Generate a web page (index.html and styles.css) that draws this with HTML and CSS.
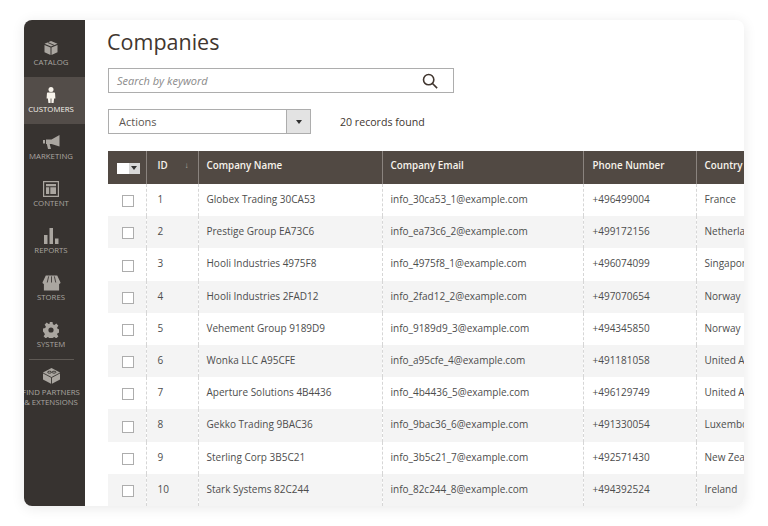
FILE: index.html
```html
<!DOCTYPE html>
<html>
<head>
  <title>Companies</title>
  <link rel="stylesheet" href="styles.css">
</head>
<body>
<div class="card">
  <div class="sidebar">
    <div class="nav-item">
      <svg class="nav-icon" viewBox="0 0 16 16"><path d="M8 1l6.500 2.800L8 6.600 1.500 3.800z M1.500 5l6 2.600V15l-6-2.800z M14.500 5l-6 2.600V15l6-2.800z"/><path class="cut" d="M4.800 2.500l6.200 2.800"/></svg>
      <span>Catalog</span>
    </div>
    <div class="nav-item active">
      <svg class="nav-icon" viewBox="0 0 16 16"><circle cx="8" cy="2.600" r="2.500"/><path d="M5 5.600h6c.8 0 1 .5 1.100 1.100l.3 4.800h-1.300L10.600 16H8.400v-4.500H7.600V16H5.400l-.5-4.500H3.600l.3-4.800c.1-.6.300-1.100 1.100-1.100z"/></svg>
      <span>Customers</span>
    </div>
    <div class="nav-item">
      <svg class="nav-icon wide" viewBox="0 0 18 16"><path d="M17 1v11.500L9 10H7.200l1.300 5H5.500L4.300 10H3.500V5.500H9z"/><path d="M.5 6h2v3.500h-2z"/></svg>
      <span>Marketing</span>
    </div>
    <div class="nav-item">
      <svg class="nav-icon" viewBox="0 0 16 16"><path fill-rule="evenodd" d="M0 0h16v16H0z M1.200 1.200v13.600h13.600V1.200z"/><path d="M3 3h10v2.200H3z M3 6.300h3.200V13H3z M7.300 6.300H13V13H7.300z"/></svg>
      <span>Content</span>
    </div>
    <div class="nav-item">
      <svg class="nav-icon" viewBox="0 0 16 16"><path d="M1 7h3.500v9H1z M6.500 0H10v16H6.500z M12 10.500h3.500V16H12z"/></svg>
      <span>Reports</span>
    </div>
    <div class="nav-item">
      <svg class="nav-icon wide" viewBox="0 0 20 16"><path d="M4 0h12l3.500 7.500c0 1-.8 1.500-1.500 1.500H2C1.300 9 .5 8.500.5 7.500z"/><path d="M2 9h16v7H2z"/><path class="cut" d="M7 1L5.500 7.500M10 1v6.500M13 1l1.500 6.500"/></svg>
      <span>Stores</span>
    </div>
    <div class="nav-item">
      <svg class="nav-icon" viewBox="0 0 16 16"><path fill-rule="evenodd" d="M6.500 0h3l.4 2.300 1.500.6 1.900-1.300 2.100 2.100-1.300 1.900.6 1.500 2.300.4v3l-2.300.4-.6 1.500 1.300 1.900-2.100 2.100-1.900-1.300-1.500.6-.4 2.300h-3l-.4-2.300-1.500-.6-1.900 1.300-2.100-2.100 1.300-1.900-.6-1.500L0 9.500v-3l2.300-.4.6-1.500L1.600 2.700l2.100-2.100 1.900 1.300 1.500-.6z M8 5.400a2.600 2.600 0 1 0 0 5.200 2.600 2.600 0 0 0 0-5.200z"/></svg>
      <span>System</span>
    </div>
    <div class="nav-sep"></div>
    <div class="nav-item partners">
      <svg class="nav-icon wide" viewBox="0 0 18 16"><path d="M9 0l8.500 4.500v7L9 16 .5 11.500v-7z"/><path class="cut" d="M.5 5L9 9.500 17.500 5M9 9.500V16M5 4.200a2 1 0 1 0 4 0 2 1 0 1 0-4 0M9.500 4.200a2 1 0 1 0 4 0 2 1 0 1 0-4 0"/></svg>
      <span>Find Partners<br>&amp; Extensions</span>
    </div>
  </div>

  <div class="main">
    <h1 class="title">Companies</h1>

    <div class="search">
      <span class="search-text">Search by keyword</span>
      <svg class="search-icon" viewBox="0 0 18 18"><circle cx="7.500" cy="7.500" r="5.800"/><path d="M11.800 11.800L17 17"/></svg>
    </div>

    <div class="toolbar">
      <div class="actions">
        <span class="actions-label">Actions</span>
        <span class="actions-btn"><i class="arrow"></i></span>
      </div>
      <span class="records">20 records found</span>
    </div>

    <table class="grid">
      <thead>
        <tr>
          <th class="col-check"><span class="head-check"><b></b><span><i class="arrow"></i></span></span></th>
          <th class="col-id">ID<span class="sort">↓</span></th>
          <th class="col-name">Company Name</th>
          <th class="col-email">Company Email</th>
          <th class="col-phone">Phone Number</th>
          <th class="col-country">Country</th>
        </tr>
      </thead>
      <tbody>
        <tr><td><span class="box"></span></td><td>1</td><td>Globex Trading 30CA53</td><td>info_30ca53_1@example.com</td><td>+496499004</td><td>France</td></tr>
        <tr><td><span class="box"></span></td><td>2</td><td>Prestige Group EA73C6</td><td>info_ea73c6_2@example.com</td><td>+499172156</td><td>Netherlands</td></tr>
        <tr><td><span class="box"></span></td><td>3</td><td>Hooli Industries 4975F8</td><td>info_4975f8_1@example.com</td><td>+496074099</td><td>Singapore</td></tr>
        <tr><td><span class="box"></span></td><td>4</td><td>Hooli Industries 2FAD12</td><td>info_2fad12_2@example.com</td><td>+497070654</td><td>Norway</td></tr>
        <tr><td><span class="box"></span></td><td>5</td><td>Vehement Group 9189D9</td><td>info_9189d9_3@example.com</td><td>+494345850</td><td>Norway</td></tr>
        <tr><td><span class="box"></span></td><td>6</td><td>Wonka LLC A95CFE</td><td>info_a95cfe_4@example.com</td><td>+491181058</td><td>United Arab</td></tr>
        <tr><td><span class="box"></span></td><td>7</td><td>Aperture Solutions 4B4436</td><td>info_4b4436_5@example.com</td><td>+496129749</td><td>United Arab</td></tr>
        <tr><td><span class="box"></span></td><td>8</td><td>Gekko Trading 9BAC36</td><td>info_9bac36_6@example.com</td><td>+491330054</td><td>Luxembourg</td></tr>
        <tr><td><span class="box"></span></td><td>9</td><td>Sterling Corp 3B5C21</td><td>info_3b5c21_7@example.com</td><td>+492571430</td><td>New Zealand</td></tr>
        <tr><td><span class="box"></span></td><td>10</td><td>Stark Systems 82C244</td><td>info_82c244_8@example.com</td><td>+494392524</td><td>Ireland</td></tr>
      </tbody>
    </table>
  </div>
</div>
</body>
</html>
```

FILE: styles.css
```css
* {
  box-sizing: border-box;
}

body {
  margin: 0;
  background-color: white;
  font-family: "Open Sans", sans-serif;
  color: #41362f;
}

.card {
  display: flex;
  width: 720px;
  height: 486px;
  margin: 20px 24px;
  background-color: white;
  border-radius: 8px;
  box-shadow: 0 2px 14px rgba(0, 0, 0, 0.09);
  overflow: hidden;
}

.sidebar {
  flex: none;
  width: 61px;
  padding-top: 10px;
  background-color: #373330;
}

.nav-item {
  display: flex;
  flex-direction: column;
  align-items: center;
  height: 47px;
  padding: 10px 7px 0 0;
  color: #aaa6a0;
  font-size: 7.800px;
  line-height: 10px;
  text-align: center;
  text-transform: uppercase;
  white-space: nowrap;
}

.nav-item.active {
  background-color: #534d49;
  color: #f7f3eb;
}

.nav-item.partners {
  padding-top: 8px;
}

.nav-icon {
  display: block;
  width: 16px;
  height: 16px;
  margin-bottom: 1px;
  fill: #aaa6a0;
}

.nav-icon.wide {
  width: 19px;
}

.partners .nav-icon {
  margin-bottom: 3px;
}

.active .nav-icon {
  fill: #f7f3eb;
}

.cut {
  fill: none;
  stroke: #373330;
  stroke-width: 0.9;
}

.nav-sep {
  height: 1px;
  margin: 0 11px 0 5px;
  background-color: #5f5a55;
}

.main {
  flex: 1;
  min-width: 0;
  padding-left: 23px;
  overflow: hidden;
}

.title {
  margin: 6px 0 11px -1px;
  font-size: 21.500px;
  font-weight: 400;
  line-height: 31px;
}

.search {
  display: flex;
  align-items: center;
  justify-content: space-between;
  width: 346px;
  height: 25px;
  padding: 0 15px 0 8px;
  border: 1px solid #adadad;
}

.search-text {
  color: #8a8a8a;
  font-size: 11px;
  font-style: italic;
}

.search-icon {
  width: 16px;
  height: 16px;
  fill: none;
  stroke: #41362f;
  stroke-width: 1.800;
}

.toolbar {
  display: flex;
  align-items: center;
  gap: 29px;
  margin-top: 16px;
}

.actions {
  display: flex;
  width: 203px;
  height: 25px;
  border: 1px solid #adadad;
}

.actions-label {
  flex: 1;
  padding-left: 10px;
  font-size: 11px;
  line-height: 23px;
  color: #5c5650;
}

.actions-btn {
  display: flex;
  align-items: center;
  justify-content: center;
  width: 24px;
  background-color: #e3e3e3;
  border-left: 1px solid #adadad;
}

.arrow {
  width: 0;
  height: 0;
  border-top: 4px solid #303030;
  border-left: 3px solid transparent;
  border-right: 3px solid transparent;
}

.records {
  font-size: 10.600px;
  color: #41362f;
}

.grid {
  margin-top: 17px;
  width: 660px;
  table-layout: fixed;
  border-collapse: collapse;
  font-size: 10px;
}

.col-check { width: 38px; }
.col-id { width: 52px; }
.col-name { width: 184px; }
.col-email { width: 201px; }
.col-phone { width: 113px; }
.col-country { width: 72px; }

.grid th {
  height: 33px;
  padding: 0 8px 5px;
  background-color: #514943;
  border-left: 1px solid #8a837e;
  color: #f7f3eb;
  font-size: 9.800px;
  font-weight: 600;
  text-align: left;
  white-space: nowrap;
}

.grid th:first-child,
.grid td:first-child {
  border-left: 0;
  padding: 0 0 0 2px;
  text-align: center;
}

.grid th:first-child {
  padding-left: 3px;
}

.grid th:nth-child(2),
.grid td:nth-child(2) {
  padding-left: 11px;
}

.grid th:nth-child(5),
.grid td:nth-child(5) {
  padding-left: 9px;
}

.sort {
  float: right;
  margin-right: 1px;
  color: #b5afa9;
  font-size: 8px;
}

.head-check {
  display: inline-flex;
  vertical-align: middle;
  width: 23px;
  height: 11px;
}

.head-check b {
  width: 12px;
  background-color: white;
}

.head-check span {
  display: flex;
  flex: 1;
  align-items: center;
  justify-content: center;
  background-color: #d8d8d8;
}

.grid td {
  height: 32.200px;
  padding: 0 8px 2px;
  border-left: 1px dashed #d6d6d6;
  color: #4d4d4d;
  white-space: nowrap;
  overflow: hidden;
}

.grid tbody tr:nth-child(even) td {
  background-color: #f4f4f4;
}

.box {
  display: inline-block;
  vertical-align: middle;
  width: 12px;
  height: 12px;
  background-color: white;
  border: 1px solid #adadad;
}
```
